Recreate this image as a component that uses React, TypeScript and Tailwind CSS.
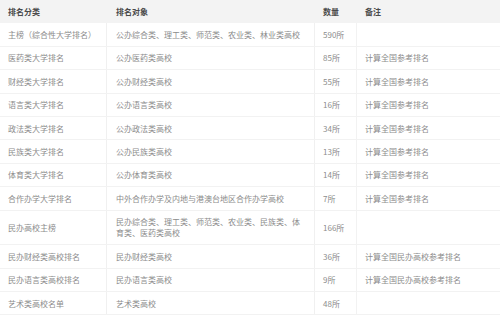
const ROWS: { cat: string; target: string; count: string; note: string; tall?: boolean }[] = [
  { cat: "主榜（综合性大学排名）", target: "公办综合类、理工类、师范类、农业类、林业类高校", count: "590所", note: "" },
  { cat: "医药类大学排名", target: "公办医药类高校", count: "85所", note: "计算全国参考排名" },
  { cat: "财经类大学排名", target: "公办财经类高校", count: "55所", note: "计算全国参考排名" },
  { cat: "语言类大学排名", target: "公办语言类高校", count: "16所", note: "计算全国参考排名" },
  { cat: "政法类大学排名", target: "公办政法类高校", count: "34所", note: "计算全国参考排名" },
  { cat: "民族类大学排名", target: "公办民族类高校", count: "13所", note: "计算全国参考排名" },
  { cat: "体育类大学排名", target: "公办体育类高校", count: "14所", note: "计算全国参考排名" },
  { cat: "合作办学大学排名", target: "中外合作办学及内地与港澳台地区合作办学高校", count: "7所", note: "计算全国参考排名" },
  {
    cat: "民办高校主榜",
    target: "民办综合类、理工类、师范类、农业类、民族类、体育类、医药类高校",
    count: "166所",
    note: "",
    tall: true,
  },
  { cat: "民办财经类高校排名", target: "民办财经类高校", count: "36所", note: "计算全国民办高校参考排名" },
  { cat: "民办语言类高校排名", target: "民办语言类高校", count: "9所", note: "计算全国民办高校参考排名" },
  { cat: "艺术类高校名单", target: "艺术类高校", count: "48所", note: "" },
];

const COLS = "grid grid-cols-[107px_208px_42px_1fr]";

export default function App() {
  return (
    <div
      className="w-[500px] h-[315px] overflow-hidden bg-white text-[8px] leading-[11px] text-[#8c8c8c]"
      style={{ fontFamily: '"Noto Sans CJK SC", "Noto Sans", sans-serif' }}
    >
      <div className={`${COLS} h-[23.4px] bg-[#f3f3f3] font-bold text-[#4a4a4a]`}>
        <div className="flex items-center pl-[8px]">排名分类</div>
        <div className="flex items-center pl-[9px]">排名对象</div>
        <div className="flex items-center pl-[8px]">数量</div>
        <div className="flex items-center pl-[8px]">备注</div>
      </div>
      {ROWS.map((r) => (
        <div
          key={r.cat}
          className={`${COLS} ${r.tall ? "h-[34.6px]" : "h-[23.4px]"} border-b border-[#f2f2f2]`}
        >
          <div className="flex items-center pl-[8px] border-r border-[#f0f0f0]">{r.cat}</div>
          <div className="flex items-center pl-[9px] pr-[11px] border-r border-[#f0f0f0]">{r.target}</div>
          <div className="flex items-center pl-[8px] border-r border-[#f2f2f2]">{r.count}</div>
          <div className="flex items-center pl-[8px]">{r.note}</div>
        </div>
      ))}
    </div>
  );
}
